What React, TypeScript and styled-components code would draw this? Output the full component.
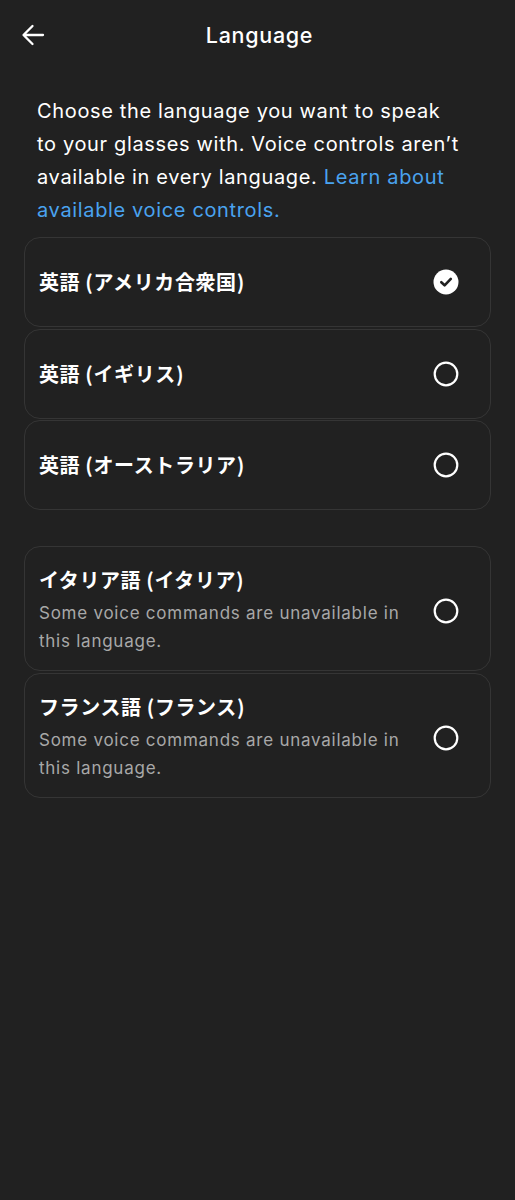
import React from 'react';
import styled, { createGlobalStyle } from 'styled-components';

const GlobalStyle = createGlobalStyle`
    html, body {
        margin: 0;
        padding: 0;
        background: #212121;
    }
    body {
        font-family: Inter, "Noto Sans CJK JP", sans-serif;
        color: #ffffff;
    }
`;

const Page = styled.div`
    width: 515px;
    min-height: 1200px;
    background: #212121;
`;

const Header = styled.header`
    position: relative;
    height: 70px;
    display: flex;
    align-items: center;
    justify-content: center;
`;

const BackButton = styled.button`
    position: absolute;
    left: 18px;
    top: 20px;
    width: 30px;
    height: 30px;
    padding: 0;
    border: none;
    background: none;
    display: flex;
    align-items: center;
    justify-content: center;
    color: #fff;
`;

const Title = styled.h1`
    margin: 0 0 0 4px;
    font-size: 21.5px;
    font-weight: 500;
    letter-spacing: 0.7px;
`;

const Intro = styled.p`
    margin: 25px 0 0;
    padding: 0 53px 0 37px;
    font-size: 20px;
    line-height: 33px;
    font-weight: 400;
    letter-spacing: 0.65px;
`;

const Link = styled.a`
    color: #4aa3ef;
    text-decoration: none;
`;

const Group = styled.div<{ $top: number }>`
    margin: ${(p) => p.$top}px 24px 0 24px;
    display: flex;
    flex-direction: column;
    gap: 1.5px;
`;

const Card = styled.div<{ $tall?: boolean }>`
    box-sizing: border-box;
    min-height: ${(p) => (p.$tall ? 124 : 90)}px;
    border: 1px solid #353535;
    border-radius: 16px;
    padding: ${(p) => (p.$tall ? '20px 31px 15px 14px' : '0 31px 0 14px')};
    display: flex;
    align-items: center;
    justify-content: space-between;
    gap: 16px;
`;

const Texts = styled.div`
    display: flex;
    flex-direction: column;
`;

const Name = styled.div`
    font-family: "Noto Sans CJK JP", Inter, sans-serif;
    font-weight: 700;
    font-size: 20px;
    line-height: 26px;
    letter-spacing: 0.6px;
`;

const Note = styled.div`
    margin-top: 6px;
    font-size: 17px;
    line-height: 28px;
    color: #a8a8a8;
    letter-spacing: 0.75px;
    max-width: 372px;
`;

const Radio = ({ checked }: { checked: boolean }) =>
    checked ? (
        <svg width="26" height="26" viewBox="0 0 26 26">
            <circle cx="13" cy="13" r="12.5" fill="#fff" />
            <path d="M8.3 13.2 L11.6 16.3 L17.8 9.9" fill="none" stroke="#212121" strokeWidth="2.6" strokeLinecap="round" strokeLinejoin="round" />
        </svg>
    ) : (
        <svg width="26" height="26" viewBox="0 0 26 26">
            <circle cx="13" cy="13" r="11.3" fill="none" stroke="#fff" strokeWidth="2.2" />
        </svg>
    );

const NOTE = 'Some voice commands are unavailable in this language.';

const main = [
    { name: '英語 (アメリカ合衆国)', checked: true },
    { name: '英語 (イギリス)', checked: false },
    { name: '英語 (オーストラリア)', checked: false },
];

const limited = [
    { name: 'イタリア語 (イタリア)', checked: false },
    { name: 'フランス語 (フランス)', checked: false },
];

export default function App() {
    return (
        <Page>
            <GlobalStyle />
            <Header>
                <BackButton aria-label="Back">
                    <svg width="26" height="26" viewBox="0 0 26 26">
                        <path d="M23 13 H4 M12.5 4 L3.5 13 L12.5 22" fill="none" stroke="#fff" strokeWidth="2.3" strokeLinecap="round" strokeLinejoin="round" />
                    </svg>
                </BackButton>
                <Title>Language</Title>
            </Header>
            <Intro>
                Choose the language you want to speak to your glasses with. Voice controls aren’t available in every
                language. <Link>Learn about available voice controls.</Link>
            </Intro>
            <Group $top={10}>
                {main.map((l) => (
                    <Card key={l.name}>
                        <Name>{l.name}</Name>
                        <Radio checked={l.checked} />
                    </Card>
                ))}
            </Group>
            <Group $top={36}>
                {limited.map((l) => (
                    <Card key={l.name} $tall>
                        <Texts>
                            <Name>{l.name}</Name>
                            <Note>{NOTE}</Note>
                        </Texts>
                        <Radio checked={l.checked} />
                    </Card>
                ))}
            </Group>
        </Page>
    );
}
